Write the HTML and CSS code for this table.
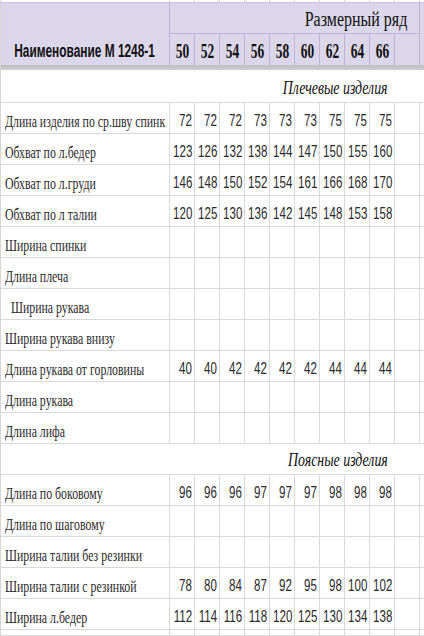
FILE: index.html
```html
<!DOCTYPE html>
<html lang="ru">
<head>
<meta charset="utf-8">
<title>Размерная таблица</title>
<link rel="stylesheet" href="styles.css">
</head>
<body>
<div class="sheet">
  <div class="row strip">
    <div class="c"></div><div class="c"></div><div class="c"></div><div class="c"></div><div class="c"></div><div class="c"></div><div class="c"></div><div class="c"></div><div class="c"></div><div class="c"></div><div class="c"></div><div class="c end"></div>
  </div>
  <div class="head">
    <div class="h-name"><span class="sq-h">Наименование М 1248-1</span></div>
    <div class="h-title"><span class="sq-t">Размерный ряд</span></div>
    <div class="h-num"><span class="sq-n">50</span></div>
    <div class="h-num"><span class="sq-n">52</span></div>
    <div class="h-num"><span class="sq-n">54</span></div>
    <div class="h-num"><span class="sq-n">56</span></div>
    <div class="h-num"><span class="sq-n">58</span></div>
    <div class="h-num"><span class="sq-n">60</span></div>
    <div class="h-num"><span class="sq-n">62</span></div>
    <div class="h-num"><span class="sq-n">64</span></div>
    <div class="h-num"><span class="sq-n">66</span></div>
    <div class="h-num"></div>
  </div>
  <div class="bar"></div>
  <div class="section first"><span class="sq-s">Плечевые изделия</span></div>

  <div class="row">
    <div class="c lbl"><span>Длина изделия по ср.шву спинк</span></div>
    <div class="c num"><span>72</span></div><div class="c num"><span>72</span></div><div class="c num"><span>72</span></div><div class="c num"><span>73</span></div><div class="c num"><span>73</span></div><div class="c num"><span>73</span></div><div class="c num"><span>75</span></div><div class="c num"><span>75</span></div><div class="c num"><span>75</span></div><div class="c num"></div><div class="c end"></div>
  </div>
  <div class="row">
    <div class="c lbl"><span>Обхват по л.бедер</span></div>
    <div class="c num"><span>123</span></div><div class="c num"><span>126</span></div><div class="c num"><span>132</span></div><div class="c num"><span>138</span></div><div class="c num"><span>144</span></div><div class="c num"><span>147</span></div><div class="c num"><span>150</span></div><div class="c num"><span>155</span></div><div class="c num"><span>160</span></div><div class="c num"></div><div class="c end"></div>
  </div>
  <div class="row">
    <div class="c lbl"><span>Обхват по л.груди</span></div>
    <div class="c num"><span>146</span></div><div class="c num"><span>148</span></div><div class="c num"><span>150</span></div><div class="c num"><span>152</span></div><div class="c num"><span>154</span></div><div class="c num"><span>161</span></div><div class="c num"><span>166</span></div><div class="c num"><span>168</span></div><div class="c num"><span>170</span></div><div class="c num"></div><div class="c end"></div>
  </div>
  <div class="row">
    <div class="c lbl"><span>Обхват по л талии</span></div>
    <div class="c num"><span>120</span></div><div class="c num"><span>125</span></div><div class="c num"><span>130</span></div><div class="c num"><span>136</span></div><div class="c num"><span>142</span></div><div class="c num"><span>145</span></div><div class="c num"><span>148</span></div><div class="c num"><span>153</span></div><div class="c num"><span>158</span></div><div class="c num"></div><div class="c end"></div>
  </div>
  <div class="row">
    <div class="c lbl"><span>Ширина спинки</span></div>
    <div class="c num"></div><div class="c num"></div><div class="c num"></div><div class="c num"></div><div class="c num"></div><div class="c num"></div><div class="c num"></div><div class="c num"></div><div class="c num"></div><div class="c num"></div><div class="c end"></div>
  </div>
  <div class="row">
    <div class="c lbl"><span>Длина плеча</span></div>
    <div class="c num"></div><div class="c num"></div><div class="c num"></div><div class="c num"></div><div class="c num"></div><div class="c num"></div><div class="c num"></div><div class="c num"></div><div class="c num"></div><div class="c num"></div><div class="c end"></div>
  </div>
  <div class="row">
    <div class="c lbl indent"><span>Ширина рукава</span></div>
    <div class="c num"></div><div class="c num"></div><div class="c num"></div><div class="c num"></div><div class="c num"></div><div class="c num"></div><div class="c num"></div><div class="c num"></div><div class="c num"></div><div class="c num"></div><div class="c end"></div>
  </div>
  <div class="row">
    <div class="c lbl"><span>Ширина рукава внизу</span></div>
    <div class="c num"></div><div class="c num"></div><div class="c num"></div><div class="c num"></div><div class="c num"></div><div class="c num"></div><div class="c num"></div><div class="c num"></div><div class="c num"></div><div class="c num"></div><div class="c end"></div>
  </div>
  <div class="row">
    <div class="c lbl"><span>Длина рукава от горловины</span></div>
    <div class="c num"><span>40</span></div><div class="c num"><span>40</span></div><div class="c num"><span>42</span></div><div class="c num"><span>42</span></div><div class="c num"><span>42</span></div><div class="c num"><span>42</span></div><div class="c num"><span>44</span></div><div class="c num"><span>44</span></div><div class="c num"><span>44</span></div><div class="c num"></div><div class="c end"></div>
  </div>
  <div class="row">
    <div class="c lbl"><span>Длина рукава</span></div>
    <div class="c num"></div><div class="c num"></div><div class="c num"></div><div class="c num"></div><div class="c num"></div><div class="c num"></div><div class="c num"></div><div class="c num"></div><div class="c num"></div><div class="c num"></div><div class="c end"></div>
  </div>
  <div class="row">
    <div class="c lbl"><span>Длина лифа</span></div>
    <div class="c num"></div><div class="c num"></div><div class="c num"></div><div class="c num"></div><div class="c num"></div><div class="c num"></div><div class="c num"></div><div class="c num"></div><div class="c num"></div><div class="c num"></div><div class="c end"></div>
  </div>

  <div class="section"><span class="sq-s">Поясные изделия</span></div>

  <div class="row">
    <div class="c lbl"><span>Длина по боковому</span></div>
    <div class="c num"><span>96</span></div><div class="c num"><span>96</span></div><div class="c num"><span>96</span></div><div class="c num"><span>97</span></div><div class="c num"><span>97</span></div><div class="c num"><span>97</span></div><div class="c num"><span>98</span></div><div class="c num"><span>98</span></div><div class="c num"><span>98</span></div><div class="c num"></div><div class="c end"></div>
  </div>
  <div class="row">
    <div class="c lbl"><span>Длина по шаговому</span></div>
    <div class="c num"></div><div class="c num"></div><div class="c num"></div><div class="c num"></div><div class="c num"></div><div class="c num"></div><div class="c num"></div><div class="c num"></div><div class="c num"></div><div class="c num"></div><div class="c end"></div>
  </div>
  <div class="row">
    <div class="c lbl"><span>Ширина талии без резинки</span></div>
    <div class="c num"></div><div class="c num"></div><div class="c num"></div><div class="c num"></div><div class="c num"></div><div class="c num"></div><div class="c num"></div><div class="c num"></div><div class="c num"></div><div class="c num"></div><div class="c end"></div>
  </div>
  <div class="row">
    <div class="c lbl"><span>Ширина талии с резинкой</span></div>
    <div class="c num"><span>78</span></div><div class="c num"><span>80</span></div><div class="c num"><span>84</span></div><div class="c num"><span>87</span></div><div class="c num"><span>92</span></div><div class="c num"><span>95</span></div><div class="c num"><span>98</span></div><div class="c num"><span>100</span></div><div class="c num"><span>102</span></div><div class="c num"></div><div class="c end"></div>
  </div>
  <div class="row">
    <div class="c lbl"><span>Ширина л.бедер</span></div>
    <div class="c num"><span>112</span></div><div class="c num"><span>114</span></div><div class="c num"><span>116</span></div><div class="c num"><span>118</span></div><div class="c num"><span>120</span></div><div class="c num"><span>125</span></div><div class="c num"><span>130</span></div><div class="c num"><span>134</span></div><div class="c num"><span>138</span></div><div class="c num"></div><div class="c end"></div>
  </div>
  <div class="row tail">
    <div class="c"></div><div class="c"></div><div class="c"></div><div class="c"></div><div class="c"></div><div class="c"></div><div class="c"></div><div class="c"></div><div class="c"></div><div class="c"></div><div class="c"></div><div class="c end"></div>
  </div>
</div>
</body>
</html>
```
FILE: styles.css
```css
html, body {
  margin: 0;
  padding: 0;
  background: #fff;
}
.sheet {
  width: 424px;
  height: 636px;
  overflow: hidden;
  display: flex;
  flex-direction: column;
  border-left: 1px solid #d6d6d6;
  box-sizing: border-box;
}
.row {
  display: grid;
  grid-template-columns: 169px repeat(10, 25px) 1fr;
  height: 31px;
  flex: none;
}
.row.strip { height: 3px; }
.row.tail { height: 6px; }
.c {
  box-sizing: border-box;
  border-right: 1px solid #d9d9d9;
  border-bottom: 1px solid #d9d9d9;
  overflow: hidden;
  white-space: nowrap;
}
.c.end { border-right: none; }
.lbl {
  display: flex;
  align-items: flex-end;
  padding: 0 0 1px 4px;
  font-family: "Liberation Serif", "Times New Roman", serif;
  font-size: 16px;
  line-height: 20px;
  color: #2b2b2b;
}
.lbl.indent { padding-left: 10px; }
.lbl span { display: inline-block; flex: none; transform: scaleX(0.74); transform-origin: left bottom; }
.num {
  display: flex;
  align-items: flex-end;
  justify-content: flex-end;
  padding: 0 2px 2px 0;
  font-family: "Liberation Sans", Arial, sans-serif;
  font-size: 17px;
  line-height: 20px;
  color: #2a2a2a;
}
.num span { display: inline-block; flex: none; transform: scaleX(0.68); transform-origin: right bottom; }

.head {
  display: grid;
  grid-template-columns: 169px repeat(10, 25px) 1fr;
  grid-template-rows: 31px 31px;
  background: #dcd6ea;
  flex: none;
  border-top: 1px solid #c9c2dd;
  margin-top: -1px;
}
.h-name {
  grid-row: 1 / 3;
  grid-column: 1;
  border-right: 1px solid #bdb4d3;
  display: flex;
  align-items: flex-end;
  justify-content: center;
  padding-bottom: 3px;
  font-family: "Liberation Sans", Arial, sans-serif;
  font-weight: bold;
  font-size: 18px;
  line-height: 22px;
  color: #111;
  white-space: nowrap;
  overflow: hidden;
}
.h-title {
  grid-row: 1;
  grid-column: 2 / 12;
  border-right: 1px solid #bdb4d3;
  border-bottom: 1px solid #bdb4d3;
  display: flex;
  align-items: flex-end;
  justify-content: flex-end;
  padding: 0 12px 2px 0;
  font-family: "Liberation Serif", "Times New Roman", serif;
  font-size: 20px;
  line-height: 24px;
  color: #111;
  white-space: nowrap;
}
.h-num {
  grid-row: 2;
  box-sizing: border-box;
  border-right: 1px solid #bdb4d3;
  display: flex;
  align-items: flex-end;
  justify-content: center;
  padding-bottom: 2px;
  font-family: "Liberation Serif", "Times New Roman", serif;
  font-weight: bold;
  font-size: 21px;
  line-height: 24px;
  color: #111;
}
.sq-h { display: inline-block; flex: none; transform: scaleX(0.66); }
.sq-t { display: inline-block; transform: scaleX(0.8); transform-origin: right bottom; }
.sq-n { display: inline-block; transform: scaleX(0.64); }

.bar {
  height: 5px;
  flex: none;
  background: linear-gradient(#bdbdbd, #d0d0d0);
}
.section {
  height: 31px;
  flex: none;
  box-sizing: border-box;
  border-bottom: 1px solid #d9d9d9;
  display: flex;
  align-items: flex-end;
  justify-content: flex-end;
  padding: 0 36px 3px 0;
  font-family: "Liberation Serif", "Times New Roman", serif;
  font-style: italic;
  font-size: 19px;
  line-height: 22px;
  color: #111;
}
.section.first { height: 33px; }
.sq-s { display: inline-block; transform: scaleX(0.73); transform-origin: right bottom; }
```
